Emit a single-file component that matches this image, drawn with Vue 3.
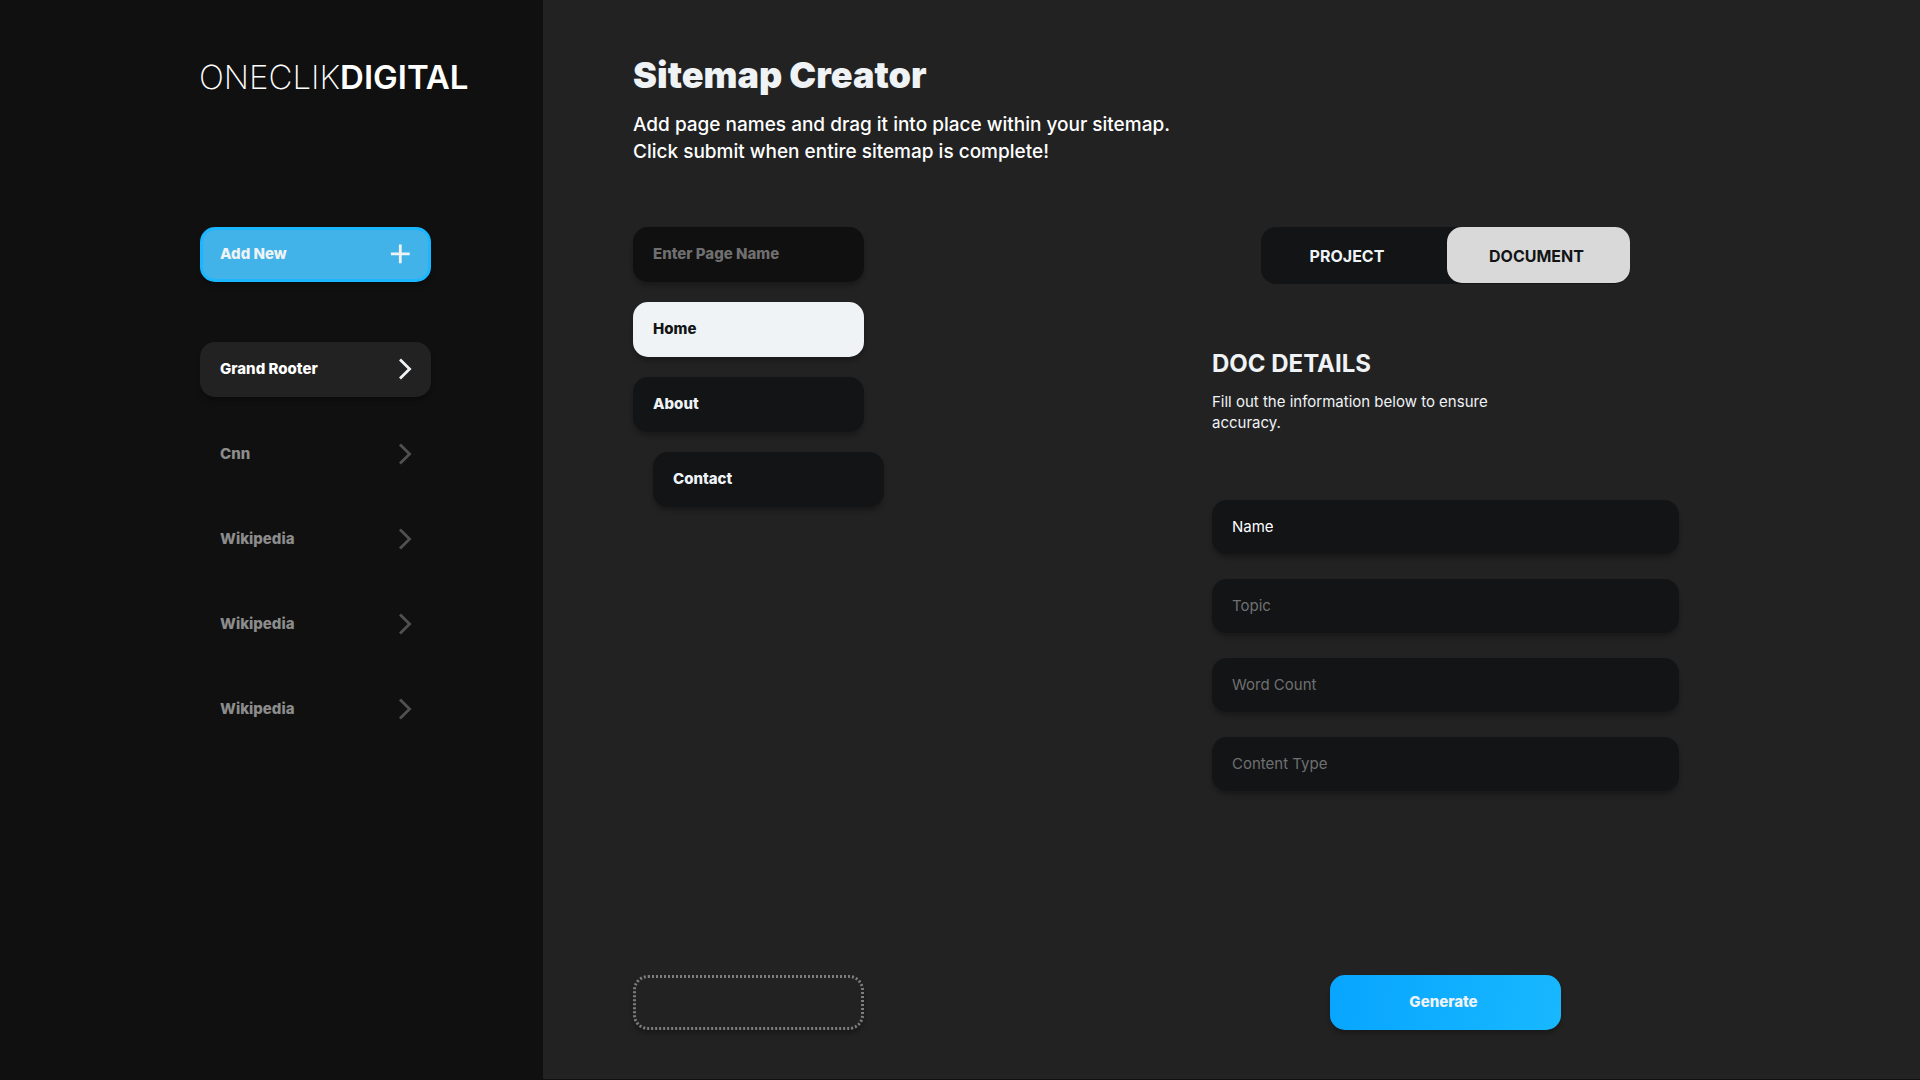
<script setup>
import { ref } from 'vue'

const clients = ['Grand Rooter', 'Cnn', 'Wikipedia', 'Wikipedia', 'Wikipedia']
const activeClient = ref(0)

const pages = [
  { name: 'Home', level: 0 },
  { name: 'About', level: 0 },
  { name: 'Contact', level: 1 }
]
const activePage = ref(0)
const newPage = ref('')

const tabs = ['PROJECT', 'DOCUMENT']
const activeTab = ref(1)

const fields = ref([
  { id: 'name', label: 'Name', value: 'Name' },
  { id: 'topic', label: 'Topic', value: '' },
  { id: 'word-count', label: 'Word Count', value: '' },
  { id: 'content-type', label: 'Content Type', value: '' }
])
</script>

<template>
  <div class="app">
    <aside class="sidebar">
      <a href="#" class="logo"><span class="logo-thin">ONECLIK</span><span class="logo-bold">DIGITAL</span></a>

      <button type="button" class="pill add">
        Add New
        <svg width="20" height="20" viewBox="0 0 20 20" fill="none" stroke="currentColor" stroke-width="2.8" aria-hidden="true">
          <path d="M10.3 .5V19.3M.9 9.9H19.7" />
        </svg>
      </button>

      <nav class="clients" aria-label="Clients">
        <button
          v-for="(client, i) in clients"
          :key="i"
          type="button"
          class="pill client"
          :class="{ active: i === activeClient }"
          @click="activeClient = i"
        >
          {{ client }}
          <svg width="13" height="22" viewBox="0 0 13 22" fill="none" stroke="currentColor" stroke-width="2.8" aria-hidden="true">
            <path d="M1 1.4L10.6 11L1 20.6" />
          </svg>
        </button>
      </nav>
    </aside>

    <main class="main">
      <header class="intro">
        <h1>Sitemap Creator</h1>
        <p>Add page names and drag it into place within your sitemap.<br />Click submit when entire sitemap is complete!</p>
      </header>

      <div class="columns">
        <section class="sitemap" aria-label="Sitemap">
          <input v-model="newPage" type="text" class="pill page-input" placeholder="Enter Page Name" aria-label="Enter Page Name" />
          <button
            v-for="(page, i) in pages"
            :key="page.name"
            type="button"
            class="pill page"
            :class="{ active: i === activePage, nested: page.level }"
            @click="activePage = i"
          >
            {{ page.name }}
          </button>
          <div class="pill drop-zone">
            <svg width="231" height="55" viewBox="0 0 231 55" fill="none" stroke="#7d7d7d" stroke-width="3" stroke-dasharray="2 2" aria-hidden="true">
              <rect x="1.5" y="1.5" width="228" height="52" rx="13.5" />
            </svg>
          </div>
        </section>

        <form class="details" @submit.prevent>
          <div class="toggle">
            <button
              v-for="(tab, i) in tabs"
              :key="tab"
              type="button"
              class="tab"
              :class="{ active: i === activeTab }"
              @click="activeTab = i"
            >
              {{ tab }}
            </button>
          </div>

          <h2>DOC DETAILS</h2>
          <p class="hint">Fill out the information below to ensure accuracy.</p>

          <div class="fields">
            <input
              v-for="field in fields"
              :id="field.id"
              :key="field.id"
              v-model="field.value"
              type="text"
              class="field"
              :placeholder="field.label"
              :aria-label="field.label"
            />
          </div>

          <button type="submit" class="pill generate">Generate</button>
        </form>
      </div>
    </main>
  </div>
</template>

<style>
body {
  margin: 0;
  background: #101010;
}
</style>

<style scoped>
.app {
  display: grid;
  grid-template-columns: 543px minmax(0, 1fr);
  min-height: 100vh;
  font-family: Inter, "Liberation Sans", sans-serif;
  color: #fff;
  background: #101010;
}

.app * {
  box-sizing: border-box;
}

button,
input {
  margin: 0;
  border: 0;
  font-family: inherit;
  color: inherit;
}

button {
  cursor: pointer;
}

.sidebar {
  display: flex;
  flex-direction: column;
  align-items: flex-start;
  padding: 57px 0 0 199px;
}

.logo {
  height: 40px;
  margin: 0 0 130px;
  font-size: 33px;
  line-height: 40px;
  color: #fff;
  text-decoration: none;
  white-space: nowrap;
}

.logo-thin {
  font-weight: 200;
}

.logo-bold {
  font-weight: 600;
}

.pill {
  display: flex;
  align-items: center;
  justify-content: space-between;
  width: 231px;
  height: 55px;
  padding: 0 20px 2px;
  border-radius: 15px;
  font-size: 15px;
  font-weight: 800;
  box-shadow: 0 4px 4px rgba(0, 0, 0, 0.25);
}

.add {
  margin-left: 1px;
  padding: 0 18px 2px 17px;
  border: 3px solid #1ab6ff;
  background: #41b3e8;
  color: #eff3f6;
}

.clients {
  display: flex;
  flex-direction: column;
  gap: 30px;
  margin: 60px 0 0 1px;
}

.client {
  padding-right: 19px;
  background: transparent;
  box-shadow: none;
  color: #8c8c8c;
}

.client svg {
  color: #505050;
}

.client.active {
  background: #222;
  box-shadow: 0 4px 4px rgba(0, 0, 0, 0.25);
  color: #fff;
}

.client.active svg {
  color: #eff3f6;
}

.main {
  display: flex;
  flex-direction: column;
  margin-bottom: 1px;
  padding: 53px 241px 49px 90px;
  background: #222;
}

h1 {
  margin: 0;
  font-size: 36px;
  font-weight: 900;
  line-height: 44px;
  color: #eff3f6;
}

.intro {
  height: 174px;
}

.intro p {
  margin: 14px 0 0;
  font-size: 19px;
  font-weight: 500;
  line-height: 27px;
}

.columns {
  display: flex;
  flex: 1;
  justify-content: space-between;
}

.sitemap {
  display: flex;
  flex-direction: column;
  gap: 20px;
}

.page-input {
  background: #101010;
}

.page-input::placeholder {
  color: #6f6f6f;
  opacity: 1;
}

.page {
  background: #121416;
  color: #eff3f6;
}

.page.nested {
  margin-left: 20px;
}

.page.active {
  background: #eff3f6;
  color: #121416;
}

.drop-zone {
  margin-top: auto;
  padding: 0;
}

.details {
  display: flex;
  flex-direction: column;
  width: 467px;
}

.toggle {
  display: flex;
  align-self: center;
  width: 369px;
  height: 57px;
  padding-bottom: 1px;
  border-radius: 15px;
  background: #121416;
}

.tab {
  flex: 1;
  padding: 2px 14px 0 0;
  border-radius: 15px;
  background: transparent;
  font-size: 16px;
  font-weight: 700;
  color: #eff3f6;
}

.tab.active {
  flex: 0 0 183px;
  padding-right: 4px;
  background: #d9d9d9;
  color: #121416;
}

h2 {
  margin: 65px 0 0;
  font-size: 24px;
  font-weight: 700;
  line-height: 30px;
  color: #eff3f6;
}

.hint {
  width: 300px;
  margin: 12px 0 0;
  font-size: 15px;
  line-height: 21px;
  color: #eff3f6;
}

.fields {
  display: flex;
  flex-direction: column;
  gap: 25px;
  margin-top: 67px;
}

.field {
  width: 100%;
  height: 54px;
  padding: 0 20px 2px;
  border-radius: 15px;
  background: #121416;
  font-size: 15px;
  box-shadow: 0 4px 4px rgba(0, 0, 0, 0.25);
}

.field::placeholder {
  color: #6f7071;
  opacity: 1;
}

.generate {
  align-self: center;
  justify-content: center;
  margin-top: auto;
  padding-right: 24px;
  background: linear-gradient(100deg, #08a5ff, #18b8ff);
  color: #eff3f6;
}
</style>
